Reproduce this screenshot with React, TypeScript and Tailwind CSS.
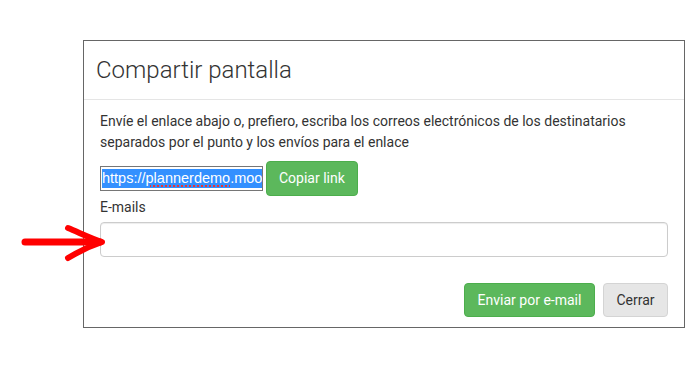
import React from "react";

function RedArrow() {
  return (
    <svg
      className="absolute left-[20px] top-[224px]"
      width="90"
      height="40"
      viewBox="0 0 90 40"
      fill="none"
    >
      <path d="M5 18 L80 18" stroke="#ff0000" strokeWidth="7" strokeLinecap="round" />
      <path
        d="M48 4 C58 8 70 14 82 18 C70 22 58 28 48 34"
        stroke="#ff0000"
        strokeWidth="6"
        strokeLinecap="round"
        strokeLinejoin="round"
      />
    </svg>
  );
}

export default function App() {
  return (
    <div className="relative w-[700px] h-[385px] bg-white font-['Roboto',sans-serif] text-[#333]">
      <div className="pl-[83px] pt-[40px]">
        <div className="w-[602px] h-[288px] border border-[#666] bg-white flex flex-col">
          {/* Header */}
          <div className="h-[59px] px-[12px] flex items-center border-b border-[#e5e5e5]">
            <h4 className="text-[24px] font-light leading-none text-[#333]">Compartir pantalla</h4>
          </div>

          {/* Body */}
          <div className="px-[16px] pt-[11px] flex flex-col">
            <p className="text-[14px] leading-[21px]">
              Envíe el enlace abajo o, prefiero, escriba los correos electrónicos de los destinatarios
              separados por el punto y los envíos para el enlace
            </p>

            <div className="flex items-center gap-[3px] mt-[8px]">
              <div className="w-[163px] h-[25px] border border-[#767676] overflow-hidden flex items-center px-[1px]">
                <span className="whitespace-nowrap bg-[#3390ff] text-white text-[14.5px] leading-[19px] font-['Liberation_Sans',Arial,sans-serif]">
                  https://
                  <span className="underline decoration-dotted decoration-[#e33] decoration-2 underline-offset-2">
                    plannerdemo
                  </span>
                  .moo
                </span>
              </div>
              <button className="h-[35px] px-[12px] rounded-[4px] bg-[#5cb85c] border border-[#4cae4c] text-white text-[14px]">
                Copiar link
              </button>
            </div>

            <label className="text-[14px] leading-[20px] mt-[1px]">E-mails</label>
            <div className="mt-[5px] h-[35px] w-full rounded-[4px] border border-[#ccc] shadow-[inset_0_1px_1px_rgba(0,0,0,0.075)]" />
          </div>

          {/* Footer */}
          <div className="px-[16px] pt-[26px] flex justify-end gap-[8px]">
            <button className="h-[34px] w-[131px] rounded-[4px] bg-[#5cb85c] border border-[#4cae4c] text-white text-[14px]">
              Enviar por e-mail
            </button>
            <button className="h-[34px] w-[65px] rounded-[4px] bg-[#e6e6e6] border border-[#d4d4d4] text-[#333] text-[14px]">
              Cerrar
            </button>
          </div>
        </div>
      </div>
      <RedArrow />
    </div>
  );
}
